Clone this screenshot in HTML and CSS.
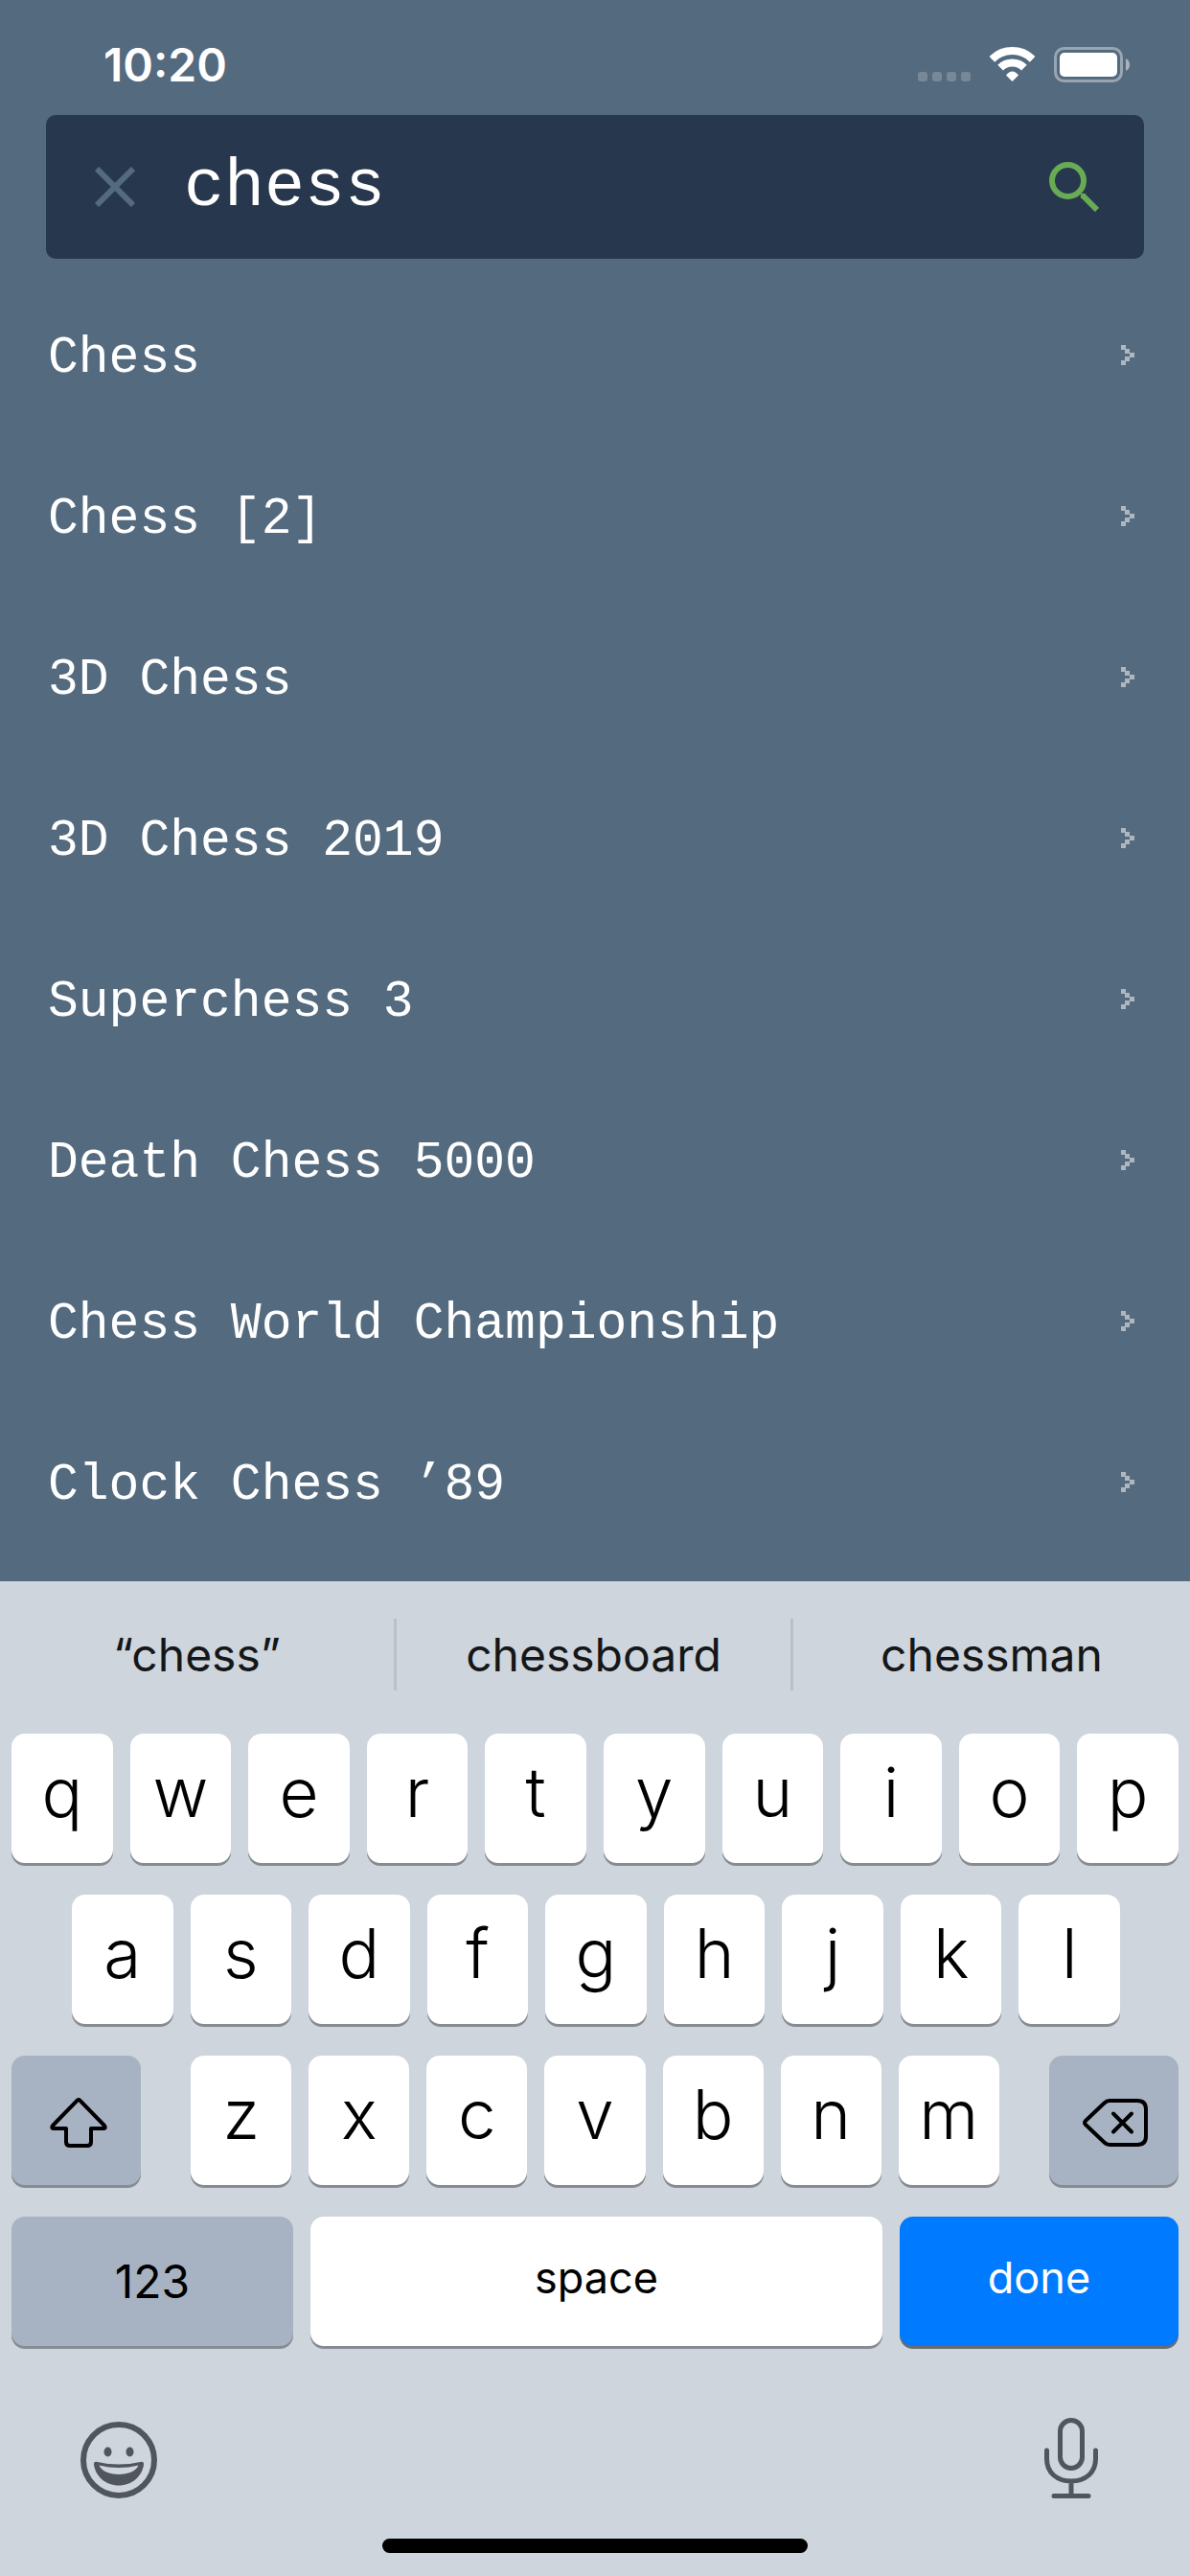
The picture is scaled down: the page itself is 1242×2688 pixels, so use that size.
FILE: index.html
```html
<!DOCTYPE html>
<html lang="en">
<head>
<meta charset="utf-8">
<meta name="viewport" content="width=device-width, initial-scale=1">
<title>Search</title>
<link rel="stylesheet" href="styles.css">
</head>
<body>
<div class="screen">
  <header class="status">
    <time class="clock">10:20</time>
    <div class="indicators">
      <span class="signal"><i></i><i></i><i></i><i></i></span>
      <svg class="wifi" width="47" height="36" viewBox="0 0 47 36" fill="none" stroke="#fff" stroke-width="8" aria-hidden="true">
        <path d="M2.3 12.8A30 30 0 0 1 44.7 12.8"/>
        <path d="M11.1 21.6A17.5 17.5 0 0 1 35.9 21.6"/>
        <path d="M17 29.500Q23.500 21.500 30 29.500L23.500 36Z" fill="#fff" stroke="none"/>
      </svg>
      <svg class="battery" width="79" height="37" viewBox="0 0 79 37" aria-hidden="true">
        <rect x="1.500" y="1.500" width="69" height="34" rx="9" fill="none" stroke="#98a5b2" stroke-width="3"/>
        <rect x="6" y="6" width="60" height="25" rx="5" fill="#fff"/>
        <path d="M75 12Q79 14 79 18.500T75 25Z" fill="#a9b4be"/>
      </svg>
    </div>
  </header>

  <main class="content">
    <form class="search" role="search">
      <button class="icon-button" type="button" aria-label="Clear">
        <svg width="42" height="42" viewBox="0 0 42 42" stroke="#546a7f" stroke-width="6"><path d="M2 2L40 40M40 2L2 40"/></svg>
      </button>
      <input class="query" type="text" value="chess" aria-label="Search games">
      <button class="icon-button" type="submit" aria-label="Search">
        <svg width="52" height="52" viewBox="0 0 52 52" fill="none" stroke="#68ab54" stroke-width="6"><circle cx="19.500" cy="19.500" r="16.500"/><path d="M34.500 34.500L50 50"/><path d="M33 33H38V38H33Z" fill="#68ab54" stroke="none"/></svg>
      </button>
    </form>

    <svg width="0" height="0" class="sprite" aria-hidden="true">
      <symbol id="chevron" viewBox="0 0 14 21"><path d="M0 0H5V4H9V8H14V13H9V17H5V21H0V16H4V12H9V9H4V5H0Z"/></symbol>
    </svg>
    <ul class="results">
      <li><a class="result" href="#"><span>Chess</span><svg class="chevron"><use href="#chevron"/></svg></a></li>
      <li><a class="result" href="#"><span>Chess [2]</span><svg class="chevron"><use href="#chevron"/></svg></a></li>
      <li><a class="result" href="#"><span>3D Chess</span><svg class="chevron"><use href="#chevron"/></svg></a></li>
      <li><a class="result" href="#"><span>3D Chess 2019</span><svg class="chevron"><use href="#chevron"/></svg></a></li>
      <li><a class="result" href="#"><span>Superchess 3</span><svg class="chevron"><use href="#chevron"/></svg></a></li>
      <li><a class="result" href="#"><span>Death Chess 5000</span><svg class="chevron"><use href="#chevron"/></svg></a></li>
      <li><a class="result" href="#"><span>Chess World Championship</span><svg class="chevron"><use href="#chevron"/></svg></a></li>
      <li><a class="result" href="#"><span>Clock Chess ’89</span><svg class="chevron"><use href="#chevron"/></svg></a></li>
    </ul>
  </main>

  <section class="keyboard" aria-label="Keyboard">
    <div class="suggestions">
      <button class="suggestion">“chess”</button>
      <button class="suggestion">chessboard</button>
      <button class="suggestion">chessman</button>
    </div>
    <div class="rows">
      <div class="row">
        <button class="key">q</button><button class="key">w</button><button class="key">e</button><button class="key">r</button><button class="key">t</button><button class="key">y</button><button class="key">u</button><button class="key">i</button><button class="key">o</button><button class="key">p</button>
      </div>
      <div class="row row-home">
        <button class="key">a</button><button class="key">s</button><button class="key">d</button><button class="key">f</button><button class="key">g</button><button class="key">h</button><button class="key">j</button><button class="key">k</button><button class="key">l</button>
      </div>
      <div class="row row-lower">
        <button class="key key-gray key-icon" aria-label="Shift">
          <svg width="60" height="52" viewBox="0 0 60 52" fill="none" stroke="#000" stroke-width="4" stroke-linejoin="round"><path d="M28.700 2.600Q30 1.400 31.300 2.600L57 29Q59 32 55.500 32H43V46Q43 50 39 50H21Q17 50 17 46V32H4.500Q1 32 3 29Z"/></svg>
        </button>
        <div class="row letters">
          <button class="key">z</button><button class="key">x</button><button class="key">c</button><button class="key">v</button><button class="key">b</button><button class="key">n</button><button class="key">m</button>
        </div>
        <button class="key key-gray key-icon" aria-label="Delete">
          <svg width="68" height="50" viewBox="0 0 68 50" fill="none" stroke="#000" stroke-width="4" stroke-linejoin="round" stroke-linecap="round"><path d="M28 2H57Q66 2 66 11V39Q66 48 57 48H28Q25 48 22.500 45.500L3 27Q1 25 3 23L22.500 4.500Q25 2 28 2Z"/><path d="M32 15.500L51 34.500M51 15.500L32 34.500"/></svg>
        </button>
      </div>
      <div class="row row-bottom">
        <button class="key key-gray key-word key-numbers">123</button>
        <button class="key key-word">space</button>
        <button class="key key-blue key-word">done</button>
      </div>
    </div>
    <div class="tools">
      <button class="icon-button" aria-label="Emoji">
        <svg width="80" height="80" viewBox="0 0 80 80" fill="none"><circle cx="40" cy="40" r="37" stroke="#50555e" stroke-width="6"/><ellipse cx="28.500" cy="31.500" rx="4" ry="5" fill="#50555e"/><ellipse cx="51.500" cy="31.500" rx="4" ry="5" fill="#50555e"/><path fill="#50555e" fill-rule="evenodd" d="M14 45C13.500 42 15.500 41.500 17.500 42Q40 47 62.500 42C64.500 41.500 66.500 42 66 45C64 57 54 66.500 40 66.500S16 57 14 45ZM19.500 45.500C22 51.500 30 55 40 55S58 51.500 60.500 45.500Q40 50.500 19.500 45.500Z"/></svg>
      </button>
      <button class="icon-button" aria-label="Dictate">
        <svg width="56" height="84" viewBox="0 0 56 84" fill="none" stroke="#50555e" stroke-width="5" stroke-linecap="round"><rect x="16.500" y="2.500" width="23" height="50" rx="11.500"/><path d="M2.500 34V43C2.500 57 13 66 28 66S53.500 57 53.500 43V34M28 66V81M10 81.500H46"/></svg>
      </button>
    </div>
    <div class="home"></div>
  </section>
</div>
</body>
</html>
```
FILE: styles.css
```css
* { box-sizing: border-box; }

body {
  margin: 0;
  background: #546a7f;
  font-family: Inter, "Liberation Sans", sans-serif;
}

button {
  margin: 0;
  padding: 0;
  border: 0;
  background: none;
  color: inherit;
  font: inherit;
}

svg { display: block; flex: none; }

.screen {
  display: flex;
  flex-direction: column;
  min-height: 100vh;
}

/* Status bar */
.status {
  display: flex;
  justify-content: space-between;
  height: 120px;
  padding: 0 63px 0 108px;
  color: #fff;
}
.clock {
  padding-top: 38px;
  font-size: 48px;
  font-weight: 600;
  line-height: 60px;
}
.indicators {
  display: flex;
  align-items: flex-start;
  padding-top: 49px;
}
.signal {
  display: flex;
  gap: 5px;
  margin: 26px 20px 0 0;
}
.signal i {
  width: 10px;
  height: 10px;
  border-radius: 3px;
  background: #778998;
}
.wifi { margin-right: 20px; }

/* Search field and results */
.content { flex: 1; padding: 0 48px; }
.search {
  display: flex;
  align-items: center;
  height: 150px;
  padding: 0 47px 0 51px;
  border-radius: 10px;
  background: #27374d;
}
.query {
  flex: 1;
  min-width: 0;
  height: 100%;
  margin: 0 24px 0 51px;
  padding: 0;
  border: 0;
  outline: 0;
  background: none;
  color: #fff;
  font: 70px "Liberation Mono", monospace;
}
.icon-button { flex: none; }
.sprite { position: absolute; }
.results {
  margin: 0;
  padding: 20px 0 0;
  list-style: none;
}
.result {
  display: flex;
  align-items: center;
  justify-content: space-between;
  height: 168px;
  padding: 0 10px 0 2px;
  color: #fff;
  font: 53px/60px "Liberation Mono", monospace;
  text-decoration: none;
}
.chevron {
  width: 14px;
  height: 21px;
  margin-bottom: 8px;
  fill: #aeb7bf;
}

/* Keyboard */
.keyboard {
  padding-bottom: 24px;
  background: #ced5dd;
  color: #000;
}
.suggestions {
  display: grid;
  grid-template-columns: repeat(3, 1fr);
  padding: 39px 0 45px;
}
.suggestion {
  height: 75px;
  border-right: 3px solid #b8c0c8;
  color: #151618;
  font-size: 48px;
  line-height: 75px;
}
.suggestion:last-child { border-right: 0; }
.rows {
  display: grid;
  gap: 33px;
  padding: 0 12px;
}
.row {
  display: grid;
  grid-auto-columns: 1fr;
  grid-auto-flow: column;
  gap: 18px;
}
.row-home { padding: 0 61px 0 63px; }
.row-lower { grid-template-columns: 135fr 843fr 135fr; gap: 52px; }
.row-bottom { grid-template-columns: 294fr 597fr 291fr; }
.key {
  display: flex;
  align-items: center;
  justify-content: center;
  min-width: 0;
  height: 135px;
  padding-bottom: 14px;
  border-radius: 14px;
  background: #fff;
  box-shadow: 0 3px 0 #878b92;
  font-size: 71px;
  font-weight: 350;
}
.key-word { padding-bottom: 9px; font-size: 45px; font-weight: 400; }
.key-numbers { padding-bottom: 0; font-size: 48px; }
.key-gray { background: #a7b3c3; }
.key-blue { background: #007aff; color: #fff; box-shadow: 0 3px 0 #686c75; }
.key-icon { padding: 4px 0 0 4px; }

.tools {
  display: flex;
  align-items: flex-end;
  justify-content: space-between;
  padding: 75px 96px 42px 84px;
}
.home {
  width: 444px;
  height: 15px;
  margin: 0 auto;
  border-radius: 8px;
  background: #000;
}
```
